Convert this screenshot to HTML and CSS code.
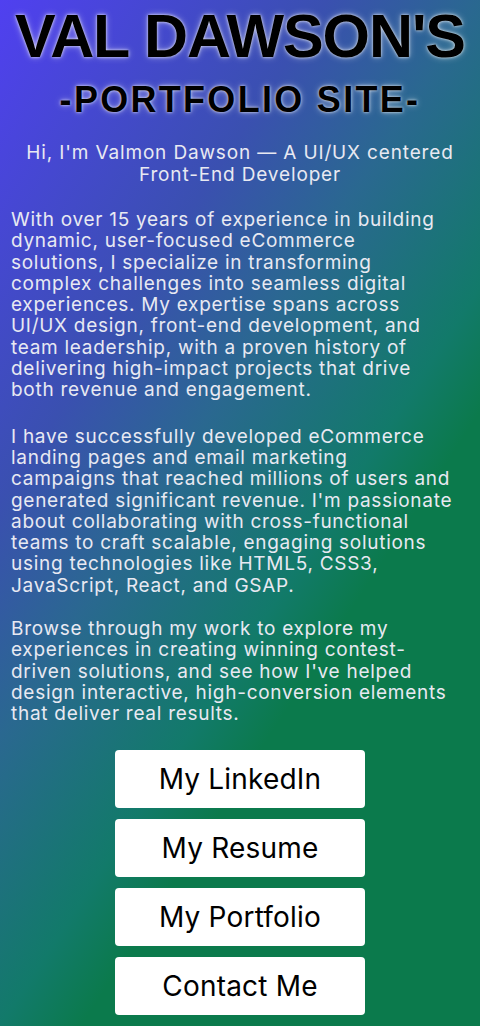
FILE: index.html
```html
<!DOCTYPE html>
<html lang="en">
<head>
<meta charset="utf-8">
<title>Val Dawson's Portfolio Site</title>
<link rel="stylesheet" href="styles.css">
</head>
<body>
<main class="page">
  <header class="hero">
    <h1 class="title">VAL DAWSON'S</h1>
    <h2 class="subtitle">-PORTFOLIO SITE-</h2>
    <p class="intro">Hi, I'm Valmon Dawson — A UI/UX centered<br>Front-End Developer</p>
  </header>
  <section class="about">
    <p class="para para-first">With over 15 years of experience in building<br>dynamic, user-focused eCommerce<br>solutions, I specialize in transforming<br>complex challenges into seamless digital<br>experiences. My expertise spans across<br>UI/UX design, front-end development, and<br>team leadership, with a proven history of<br>delivering high-impact projects that drive<br>both revenue and engagement.</p>
    <p class="para para-second">I have successfully developed eCommerce<br>landing pages and email marketing<br>campaigns that reached millions of users and<br>generated significant revenue. I'm passionate<br>about collaborating with cross-functional<br>teams to craft scalable, engaging solutions<br>using technologies like HTML5, CSS3,<br>JavaScript, React, and GSAP.</p>
    <p class="para para-third">Browse through my work to explore my<br>experiences in creating winning contest-<br>driven solutions, and see how I've helped<br>design interactive, high-conversion elements<br>that deliver real results.</p>
  </section>
  <nav class="links">
    <a class="btn" href="#">My LinkedIn</a>
    <a class="btn" href="#">My Resume</a>
    <a class="btn" href="#">My Portfolio</a>
    <a class="btn" href="#">Contact Me</a>
  </nav>
</main>
</body>
</html>
```

FILE: styles.css
```css
* { box-sizing: border-box; }
html, body { margin: 0; padding: 0; }
body {
  min-height: 1060px;
  background: linear-gradient(123deg, #5040f0 0%, #3a50b0 28%, #2a6890 41%, #127a6a 57%, #0b7a4c 64%, #0b7a4c 100%);
  font-family: "Inter", "Noto Sans", sans-serif;
  color: #e8e9f2;
}
.page {
  display: flex;
  flex-direction: column;
  padding: 0 4px 20px 11px;
}
.hero {
  text-align: center;
  padding-right: 7px;
}
.title {
  margin: 2px 0 0;
  font-family: "Liberation Sans", Arial, sans-serif;
  font-weight: 700;
  font-size: 61px;
  line-height: 68px;
  letter-spacing: -1.1px;
  white-space: nowrap;
  color: #000;
  text-shadow: 0 0 3px rgba(255,255,255,0.85), 0 0 7px rgba(255,255,255,0.45);
}
.subtitle {
  margin: 10px 0 0;
  font-family: "Liberation Sans", Arial, sans-serif;
  font-weight: 700;
  font-size: 36px;
  line-height: 40px;
  letter-spacing: 2.3px;
  color: #000;
  text-shadow: 0 0 3px rgba(255,255,255,0.85), 0 0 7px rgba(255,255,255,0.45);
}
.intro {
  margin: 22px 0 0;
  font-size: 19px;
  line-height: 22px;
  letter-spacing: 0.85px;
}
.para {
  margin: 0;
  font-size: 19px;
  line-height: 21.3px;
  letter-spacing: 0.72px;
  white-space: nowrap;
}
.para-first { margin-top: 23px; }
.para-second { margin-top: 25px; }
.para-third { margin-top: 22px; }
.links {
  display: flex;
  flex-direction: column;
  align-items: center;
  gap: 11px;
  margin-top: 25px;
  padding-right: 7px;
}
.btn {
  display: flex;
  align-items: center;
  justify-content: center;
  width: 250px;
  height: 58px;
  background: #fff;
  border-radius: 4px;
  color: #000;
  text-decoration: none;
  font-size: 28px;
  letter-spacing: 0.2px;
}
```
